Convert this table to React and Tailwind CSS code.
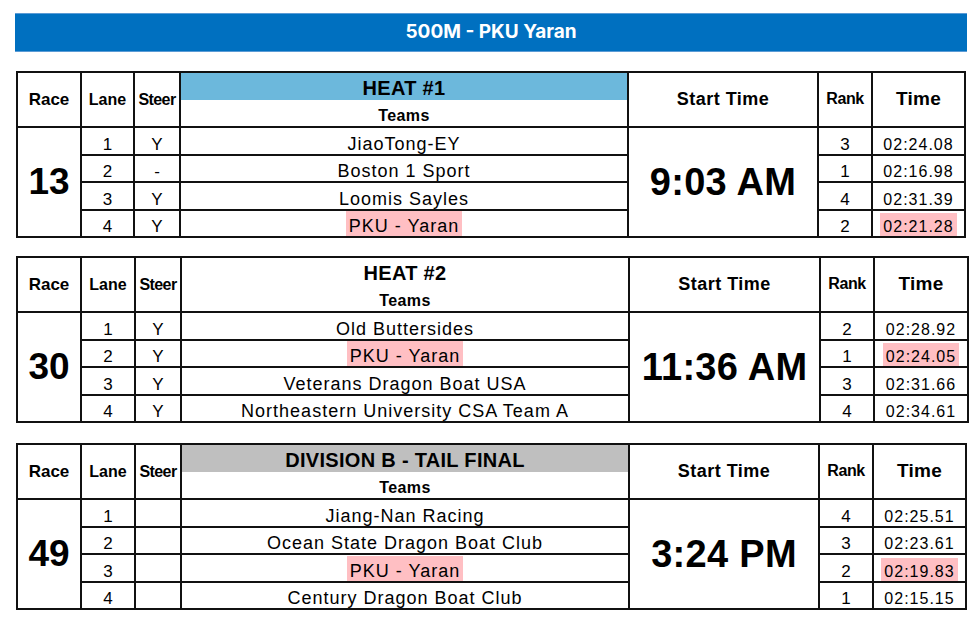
const races = [
  {
    race: "13",
    title: "HEAT #1",
    titleBg: "bg-[#6cb8dc]",
    start: "9:03 AM",
    width: "w-[948px]",
    cols: [64, 53, 46, 448, 190, 54, 93],
    mt: "mt-[19px]",
    rows: [
      { lane: "1", steer: "Y", team: "JiaoTong-EY", rank: "3", time: "02:24.08" },
      { lane: "2", steer: "-", team: "Boston 1 Sport", rank: "1", time: "02:16.98" },
      { lane: "3", steer: "Y", team: "Loomis Sayles", rank: "4", time: "02:31.39" },
      { lane: "4", steer: "Y", team: "PKU - Yaran", rank: "2", time: "02:21.28", mine: true },
    ],
  },
  {
    race: "30",
    title: "HEAT #2",
    titleBg: "bg-white",
    start: "11:36 AM",
    width: "w-[951px]",
    cols: [64, 54, 46, 448, 191, 54, 94],
    mt: "mt-[18px]",
    rows: [
      { lane: "1", steer: "Y", team: "Old Buttersides", rank: "2", time: "02:28.92" },
      { lane: "2", steer: "Y", team: "PKU - Yaran", rank: "1", time: "02:24.05", mine: true },
      { lane: "3", steer: "Y", team: "Veterans Dragon Boat USA", rank: "3", time: "02:31.66" },
      { lane: "4", steer: "Y", team: "Northeastern University CSA Team A", rank: "4", time: "02:34.61" },
    ],
  },
  {
    race: "49",
    title: "DIVISION B - TAIL FINAL",
    titleBg: "bg-[#bfbfbf]",
    start: "3:24 PM",
    width: "w-[949px]",
    cols: [64, 54, 46, 448, 190, 54, 93],
    mt: "mt-[20px]",
    rows: [
      { lane: "1", steer: "", team: "Jiang-Nan Racing", rank: "4", time: "02:25.51" },
      { lane: "2", steer: "", team: "Ocean State Dragon Boat Club", rank: "3", time: "02:23.61" },
      { lane: "3", steer: "", team: "PKU - Yaran", rank: "2", time: "02:19.83", mine: true },
      { lane: "4", steer: "", team: "Century Dragon Boat Club", rank: "1", time: "02:15.15" },
    ],
  },
];

const cell = "border-2 border-[#111] text-center p-0";

// pink marker behind our own team, filling the row height
function Highlight({ on, children }) {
  if (!on) return children;
  return <span className="inline-block bg-[#ffbfc3] px-[3px] pt-[5px]">{children}</span>;
}

function RaceTable({ data }) {
  return (
    <table className={`${data.width} ${data.mt} ml-[1px] table-fixed border-collapse border-2 border-[#111] text-black`}>
      <colgroup>
        {data.cols.map((w, i) => (
          <col key={i} style={{ width: w }} />
        ))}
      </colgroup>
      <thead>
        <tr className="h-[28px]">
          <th rowSpan={2} className={`${cell} text-[17px] font-bold`}>Race</th>
          <th rowSpan={2} className={`${cell} text-[16px] font-bold`}>Lane</th>
          <th rowSpan={2} className={`${cell} text-[16px] font-bold tracking-[-0.6px]`}>Steer</th>
          <th className={`${cell} border-b-0 ${data.titleBg} text-[20px] font-bold tracking-[0.3px] leading-[24px] pt-[2px]`}>
            {data.title}
          </th>
          <th rowSpan={2} className={`${cell} text-[18px] font-bold tracking-[0.5px]`}>Start Time</th>
          <th rowSpan={2} className={`${cell} text-[16px] font-bold tracking-[-0.4px] pb-[1px]`}>Rank</th>
          <th rowSpan={2} className={`${cell} text-[19px] font-bold tracking-[0.3px]`}>Time</th>
        </tr>
        <tr className="h-[27px]">
          <th className={`${cell} border-t-0 align-bottom text-[16px] leading-[18px] pb-[1px] font-bold tracking-[0.4px]`}>
            Teams
          </th>
        </tr>
      </thead>
      <tbody>
        {data.rows.map((r, i) => (
          <tr key={i} className="h-[27.5px]">
            {i === 0 && (
              <td rowSpan={4} className={`${cell} text-[37px] font-bold`}>
                {data.race}
              </td>
            )}
            <td className={`${cell} align-bottom text-[17px] leading-[18px]`}>{r.lane}</td>
            <td className={`${cell} align-bottom text-[17px] leading-[18px]`}>{r.steer}</td>
            <td className={`${cell} align-bottom text-[18px] leading-[20px] tracking-[1px]`}>
              <Highlight on={r.mine}>{r.team}</Highlight>
            </td>
            {i === 0 && (
              <td rowSpan={4} className={`${cell} text-[38px] font-bold tracking-[0.3px]`}>
                {data.start}
              </td>
            )}
            <td className={`${cell} align-bottom text-[17px] leading-[18px]`}>{r.rank}</td>
            <td className={`${cell} align-bottom text-[16px] leading-[18px] tracking-[1px]`}>
              <Highlight on={r.mine}>{r.time}</Highlight>
            </td>
          </tr>
        ))}
      </tbody>
    </table>
  );
}

export default function App() {
  return (
    <div className="w-[980px] h-[623px] bg-white pt-[13px] pl-[15px] font-['Liberation_Sans',Arial,sans-serif]">
      <div className="w-[952px] h-[39px] bg-[#0070c0] border-y border-[#5b9bd5] flex items-center justify-center">
        <span className="text-white text-[19px] font-bold font-['Inter',sans-serif]">500M - PKU Yaran</span>
      </div>
      {races.map((r) => (
        <RaceTable key={r.race} data={r} />
      ))}
    </div>
  );
}
